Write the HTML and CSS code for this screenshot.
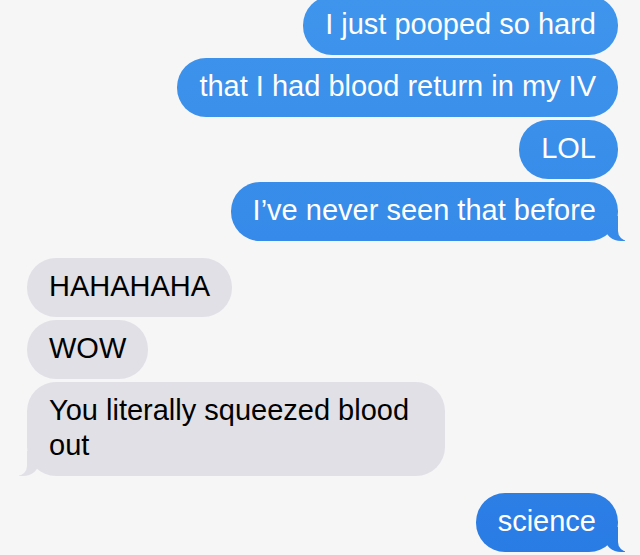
FILE: index.html
```html
<!DOCTYPE html>
<html lang="en">
<head>
  <meta charset="UTF-8" />
  <meta name="viewport" content="width=device-width, initial-scale=1.0"/>
  <title>Messages</title>
  <link rel="stylesheet" href="styles.css">
</head>
<body>
  <!-- Conversation -->
  <div class="chat">
    <div class="group sent">
      <div class="bubble">I just pooped so hard</div>
      <div class="bubble">that I had blood return in my IV</div>
      <div class="bubble">LOL</div>
      <div class="bubble tail">I’ve never seen that before</div>
    </div>

    <div class="group received">
      <div class="bubble">HAHAHAHA</div>
      <div class="bubble">WOW</div>
      <div class="bubble tail">You literally squeezed blood out</div>
    </div>

    <div class="group sent">
      <div class="bubble tail">science</div>
    </div>
  </div>
</body>
</html>
```

FILE: styles.css
```css
* {
  margin: 0;
  padding: 0;
  box-sizing: border-box;
}

body {
  font-family: 'Liberation Sans', Arial, sans-serif;
  background-color: #f6f6f7;
  overflow: hidden;
}

/* Conversation */
.chat {
  display: flex;
  flex-direction: column;
  gap: 17px;
  padding: 0 22px 0 27px;
  margin-top: -4px;
}

.group {
  display: flex;
  flex-direction: column;
  gap: 3px;
}

.group.sent {
  align-items: flex-end;
}

.group.received {
  align-items: flex-start;
}

.bubble {
  position: relative;
  max-width: 418px;
  padding: 11px 22px 13px;
  border-radius: 29px;
  font-size: 29px;
  line-height: 35px;
}

.sent .bubble {
  max-width: 470px;
}

/* iOS blue shifts darker further down the screen */
.sent .bubble,
.sent .tail::before {
  background: linear-gradient(to bottom, #3f95ec, #2a7ce5) fixed;
  color: #fff;
}

.received .bubble,
.received .tail::before {
  background-color: #e1e0e6;
  color: #000;
}

/* Bubble tails */
.tail::before,
.tail::after {
  content: "";
  position: absolute;
  bottom: 0;
  height: 25px;
}

.sent .tail::before {
  right: -7px;
  width: 20px;
  border-bottom-left-radius: 16px 14px;
}

.sent .tail::after {
  right: -26px;
  width: 26px;
  background-color: #f6f6f7;
  border-bottom-left-radius: 10px;
}

.received .tail::before {
  left: -8px;
  width: 20px;
  border-bottom-right-radius: 16px 14px;
}

.received .tail::after {
  left: -26px;
  width: 26px;
  background-color: #f6f6f7;
  border-bottom-right-radius: 10px;
}
```
